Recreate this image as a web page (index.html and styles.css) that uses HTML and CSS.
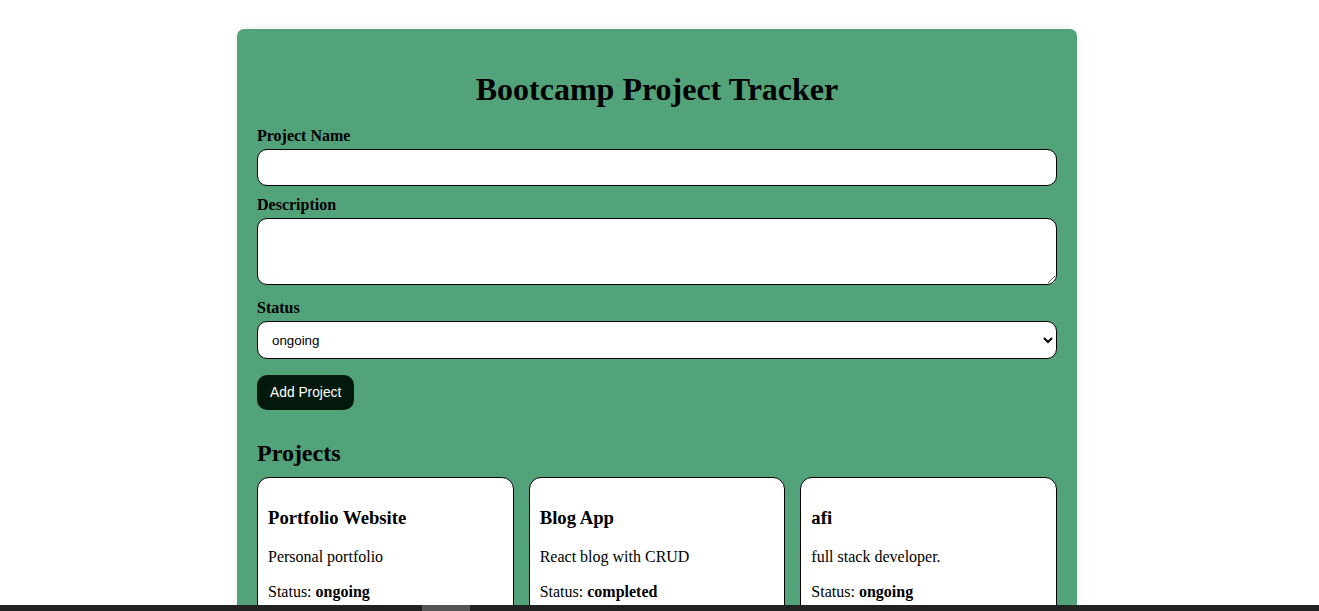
FILE: index.html
```html
<!DOCTYPE html>
<html>
<head>
<meta charset="utf-8">
<title>Bootcamp Project Tracker</title>
<link rel="stylesheet" href="styles.css">
</head>
<body>
<div class="container">
  <h1 class="title">Bootcamp Project Tracker</h1>
  <form class="form">
    <label class="label">Project Name</label>
    <input class="field" type="text">
    <label class="label">Description</label>
    <textarea class="field area"></textarea>
    <label class="label">Status</label>
    <select class="field select">
      <option>ongoing</option>
      <option>completed</option>
    </select>
    <button class="btn" type="button">Add Project</button>
  </form>
  <h2 class="section">Projects</h2>
  <div class="grid">
    <div class="card">
      <h3 class="card-title">Portfolio Website</h3>
      <p class="card-text">Personal portfolio</p>
      <p class="card-text">Status: <strong>ongoing</strong></p>
    </div>
    <div class="card">
      <h3 class="card-title">Blog App</h3>
      <p class="card-text">React blog with CRUD</p>
      <p class="card-text">Status: <strong>completed</strong></p>
    </div>
    <div class="card">
      <h3 class="card-title">afi</h3>
      <p class="card-text">full stack developer.</p>
      <p class="card-text">Status: <strong>ongoing</strong></p>
    </div>
  </div>
</div>
<div class="hbar"><div class="hthumb"></div></div>
</body>
</html>
```
FILE: styles.css
```css
html, body {
  margin: 0;
  padding: 0;
  background: #ffffff;
  font-family: "Liberation Serif", "Times New Roman", serif;
  color: #000;
}
body {
  padding: 29px 5px 0 0;
}
.container {
  width: 840px;
  box-sizing: border-box;
  margin: 0 auto;
  background: #52a27a;
  border-radius: 7px;
  padding: 20px 20px 40px;
  box-shadow: 0 0 10px rgba(0,0,0,0.08);
}
.title {
  font-size: 32px;
  text-align: center;
  margin: 22px 0 19px;
  line-height: 37px;
}
.form {
  display: flex;
  flex-direction: column;
}
.label {
  display: block;
  font-weight: bold;
  font-size: 16px;
  line-height: 18px;
  margin-bottom: 4px;
}
.field {
  display: block;
  box-sizing: border-box;
  width: 100%;
  border: 1px solid #000;
  border-radius: 10px;
  background: #fff;
  font-family: "Liberation Sans", Arial, sans-serif;
  font-size: 13.33px;
  padding: 10px;
  height: 37px;
  margin: 0 0 10px;
}
.area {
  height: 67px;
  margin-bottom: 14px;
  resize: vertical;
}
.select {
  height: 38px;
  margin-bottom: 16px;
  color: #000;
}
.btn {
  align-self: flex-start;
  background: #03190c;
  color: #fff;
  border: none;
  border-radius: 10px;
  font-family: "Liberation Sans", Arial, sans-serif;
  font-size: 13.8px;
  height: 35px;
  padding: 0 13px;
  cursor: pointer;
}
.section {
  font-size: 24px;
  line-height: 28px;
  margin: 29px 0 10px;
}
.grid {
  display: grid;
  grid-template-columns: repeat(3, 1fr);
  gap: 15px;
}
.card {
  background: #fff;
  border: 1px solid #000;
  border-radius: 12px;
  padding: 10px;
}
.card-title {
  font-size: 18.72px;
  line-height: 21.5px;
  margin: 18.7px 0 20px;
}
.card-text {
  font-size: 16px;
  line-height: 18.4px;
  margin: 16px 0;
}
.hbar {
  position: fixed;
  left: 0;
  right: 0;
  bottom: 0;
  height: 6px;
  background: #222222;
}
.hthumb {
  position: absolute;
  left: 422px;
  top: 0;
  width: 48px;
  height: 6px;
  background: #555555;
}
```
